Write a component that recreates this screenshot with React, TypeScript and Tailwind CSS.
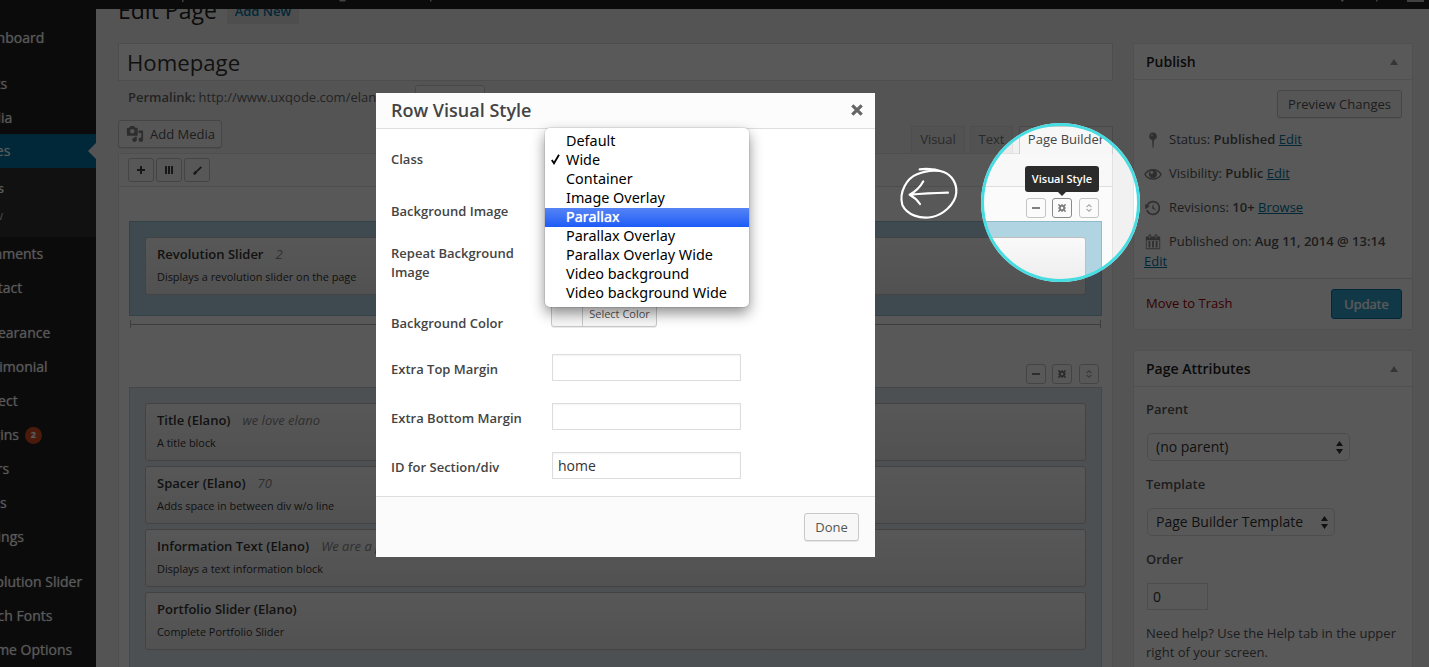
import React from "react";

type MenuEntry = { label: string; gap?: string; active?: boolean; badge?: number };

const topMenu: MenuEntry[] = [
  { label: "Dashboard", gap: "pt-0.5" },
  { label: "Posts", gap: "mt-3 pt-px" },
  { label: "Media", gap: "pt-px" },
  { label: "Pages", active: true },
];

const bottomMenu: MenuEntry[] = [
  { label: "Comments" },
  { label: "Contact" },
  { label: "Appearance", gap: "mt-[11px]" },
  { label: "Testimonial" },
  { label: "Project" },
  { label: "Plugins", badge: 2 },
  { label: "Users" },
  { label: "Tools" },
  { label: "Settings" },
  { label: "Revolution Slider", gap: "mt-[11px]" },
  { label: "Punch Fonts" },
  { label: "Theme Options" },
];

const blocks = [
  { title: "Title (Elano)", note: "we love elano", text: "A title block" },
  { title: "Spacer (Elano)", note: "70", text: "Adds space in between div w/o line" },
  { title: "Information Text (Elano)", note: "We are a premium agency", text: "Displays a text information block" },
  { title: "Portfolio Slider (Elano)", note: "", text: "Complete Portfolio Slider" },
];

const classOptions = [
  "Default",
  "Wide",
  "Container",
  "Image Overlay",
  "Parallax",
  "Parallax Overlay",
  "Parallax Overlay Wide",
  "Video background",
  "Video background Wide",
];

function MenuItem({ label, gap = "", active, badge }: MenuEntry) {
  return (
    <li className={`relative flex h-[34px] shrink-0 items-center text-sm whitespace-nowrap text-white [text-shadow:0_0_1px_rgba(255,255,255,.6)] ${gap} ${active ? "bg-[#0074a2]" : ""}`}>
      <span className="-ml-7">{label}</span>
      {badge && (
        <span className="ml-1.5 flex size-[17px] items-center justify-center rounded-full bg-[#d54e21] text-[9px] font-bold text-white">{badge}</span>
      )}
      {active && (
        <svg className="absolute top-[9px] right-0" width="8" height="16" viewBox="0 0 8 16">
          <path d="M8 0v16L0 8z" fill="#f1f1f1" />
        </svg>
      )}
    </li>
  );
}

function Sidebar() {
  return (
    <nav className="w-24 shrink-0 overflow-hidden bg-[#222222] pt-[11px]">
      <ul className="flex flex-col">
        {topMenu.map((m) => (
          <MenuItem key={m.label} {...m} />
        ))}
      </ul>
      <ul className="flex h-[69px] flex-col bg-[#333333] pt-[7px] text-[13px] whitespace-nowrap">
        <li className="flex h-[27px] items-center font-semibold text-white">
          <span className="-ml-[54px] w-[58px] text-right">All Pages</span>
        </li>
        <li className="flex h-[27px] items-center text-[#bbbbbb]">
          <span className="-ml-[55px] w-[58px] text-right">Add New</span>
        </li>
      </ul>
      <ul className="flex flex-col">
        {bottomMenu.map((m) => (
          <MenuItem key={m.label} {...m} />
        ))}
      </ul>
    </nav>
  );
}

function Block({ title, note, text }: { title: string; note: string; text: string }) {
  return (
    <div className="flex h-[58px] shrink-0 flex-col overflow-hidden rounded-[3px] border border-[#bfbfbf] bg-linear-to-b from-[#fafafa] to-[#e9e9e9] pt-[7px] pl-[11px] whitespace-nowrap text-[#333333]">
      <div className="flex h-[19px] items-center gap-3 text-[13px]">
        <span className="font-semibold">{title}</span>
        <span className="text-[#888888] italic">{note}</span>
      </div>
      <div className="mt-1 flex h-[18px] items-center text-[10.9px]">{text}</div>
    </div>
  );
}

function GearIcon() {
  return (
    <svg width="8" height="8" viewBox="0 0 8 8" fill="none">
      <rect x="2" y="2" width="4" height="4" stroke="#777" strokeWidth="1.600" />
      <path d="M4 0v2M4 6v2M0 4h2M6 4h2" stroke="#777" strokeWidth="1.200" />
      <path d="M.4.4l1.600 1.600M6 6l1.600 1.600M.4 7.600L2 6M6 2L7.600.4" stroke="#777" strokeWidth="1.500" />
    </svg>
  );
}

function RowControls({ active }: { active?: boolean }) {
  const base = "flex size-5 items-center justify-center rounded-[3px] border bg-[#fbfbfb]";
  return (
    <div className="flex h-5 justify-end pr-[3px]">
      <span className={`${base} border-[#c4c4c4]`}>
        <span className="h-0.5 w-2 bg-[#808080]" />
      </span>
      <span className={`${base} ml-1.5 ${active ? "border-[#8a8a8a]" : "border-[#c4c4c4]"}`}>
        <GearIcon />
      </span>
      <span className={`${base} ml-[7px] border-[#c4c4c4]`}>
        <svg width="6" height="8" viewBox="0 0 6 8" fill="none" stroke="#aaa" strokeWidth="1.1">
          <path d="M.6 3L3 .8 5.4 3M.6 5L3 7.2 5.4 5" />
        </svg>
      </span>
    </div>
  );
}

function ToolButton({ children }: { children: React.ReactNode }) {
  return <span className="flex h-6 w-[26px] items-center justify-center rounded-[3px] border border-[#c2c2c2] bg-[#fafafa]">{children}</span>;
}

function Editor() {
  return (
    <main className="ml-[22px] flex w-[995px] shrink-0 flex-col">
      <div className="-mt-4 flex h-[50px] shrink-0 items-start whitespace-nowrap">
        <h1 className="-mt-px flex h-9 items-center text-[23px] text-[#222222]">Edit Page</h1>
        <span className="mt-1.5 ml-2.5 flex h-[25px] w-[72px] items-center justify-center bg-[#e0e0e0] text-[13px] font-semibold text-[#0074a2]">Add New</span>
      </div>
      <div className="flex h-[38px] shrink-0 items-center border border-[#dddddd] bg-white pt-0.5 pl-2 text-[22.2px] text-[#333333]">Homepage</div>
      <div className="flex h-[39px] shrink-0 items-start pl-2.5 text-[13px] whitespace-nowrap text-[#666666]">
        <div className="flex h-8 items-center pt-0.5">
          <strong className="font-semibold">Permalink:</strong>
          <span className="ml-[3px]">http://www.uxqode.com/elano/</span>
        </div>
        <span className="mt-1 ml-[26px] h-[27px] w-[70px] rounded-[3px] border border-[#cccccc] bg-[#f7f7f7]" />
      </div>
      <div className="flex h-[33px] shrink-0 justify-between">
        <div className="flex h-7 w-[104px] items-center gap-1.5 rounded-[3px] border border-[#c6c6c6] bg-[#f7f7f7] pl-[7px] text-[13px] whitespace-nowrap text-[#555555] shadow-[0_1px_0_rgba(0,0,0,.08)]">
          <svg width="18" height="18" viewBox="0 0 20 20" fill="#828282">
            <path d="M13 11V4c0-.55-.45-1-1-1h-1.67L9 1H5L3.67 3H2c-.55 0-1 .45-1 1v7c0 .55.45 1 1 1h10c.55 0 1-.45 1-1zM7 4.5c1.38 0 2.5 1.12 2.5 2.5S8.38 9.5 7 9.5 4.5 8.38 4.5 7 5.62 4.5 7 4.5zM14 6h5v10.5c0 1.38-1.12 2.5-2.5 2.5S14 17.88 14 16.5s1.12-2.5 2.5-2.5c.17 0 .34.02.5.05V9h-3V6zm-4 8.05V13h2v3.5c0 1.38-1.12 2.5-2.5 2.5S7 17.88 7 16.5 8.12 14 9.5 14c.17 0 .34.02.5.05z" />
          </svg>
          <span className="pt-0.5">Add Media</span>
        </div>
        <div className="flex items-end text-[13px] whitespace-nowrap text-[#777777]">
          <span className="mr-[5px] flex h-[27px] w-[54px] items-center justify-center border border-b-0 border-[#e0e0e0] bg-[#ebebeb]">Visual</span>
          <span className="mr-1.5 flex h-[27px] w-[43px] items-center justify-center border border-b-0 border-[#e0e0e0] bg-[#ebebeb]">Text</span>
          <span className="z-10 -mb-px flex h-7 w-[94px] items-center justify-center border border-b-0 border-[#cfcfcf] bg-[#f7f7f7] pb-0.5 text-[#444444]">Page Builder</span>
        </div>
      </div>
      <div className="flex h-[600px] shrink-0 flex-col border border-[#e2e2e2] bg-[#fbfbfb]">
        <div className="flex h-[33px] shrink-0 items-start gap-0.5 border-b border-[#dedede] bg-[#f8f8f8] pt-1 pl-[9px]">
          <ToolButton>
            <svg width="8" height="8" viewBox="0 0 8 8" stroke="#444" strokeWidth="2">
              <path d="M4 0v8M0 4h8" />
            </svg>
          </ToolButton>
          <ToolButton>
            <svg width="8" height="8" viewBox="0 0 8 8" fill="#444">
              <path d="M0 0h2v8H0zM3 0h2v8H3zM6 0h2v8H6z" />
            </svg>
          </ToolButton>
          <ToolButton>
            <svg width="9" height="9" viewBox="0 0 9 9" fill="none" stroke="#444" strokeWidth="1.8">
              <path d="M8.4.8L4 5.2M3.6 5L1 8" />
              <path d="M3.5 5.6L.9 8.2" strokeWidth="2.4" />
            </svg>
          </ToolButton>
        </div>
        <div className="flex flex-col pt-[11px] pr-2.5 pl-2.5">
          <RowControls active />
          <div className="mt-[3px] h-[95px] border border-[#8fbccb] bg-[#b1d4e3] px-[15px] pt-[15px]">
            <Block title="Revolution Slider" note="2" text="Displays a revolution slider on the page" />
          </div>
          <div className="mx-px mt-[4px] flex h-2 items-center border-x border-[#b0b0b0]">
            <span className="h-px w-full bg-[#b0b0b0]" />
          </div>
          <div className="mt-9">
            <RowControls />
          </div>
          <div className="mt-[3px] flex h-[300px] flex-col gap-[5px] border border-[#bccbd2] bg-[#dae4ea] px-[15px] pt-[15px]">
            {blocks.map((b) => (
              <Block key={b.title} {...b} />
            ))}
          </div>
        </div>
      </div>
    </main>
  );
}

function PanelHeader({ children }: { children: React.ReactNode }) {
  return (
    <div className="flex h-9 shrink-0 items-center justify-between border-b border-[#e6e6e6] pr-3.5 pl-3 text-sm font-semibold text-[#222222]">
      {children}
      <svg width="8" height="6" viewBox="0 0 8 6" fill="#999">
        <path d="M4 0l4 6H0z" />
      </svg>
    </div>
  );
}

function StatusRow({ icon, children }: { icon: React.ReactNode; children: React.ReactNode }) {
  return (
    <div className="flex h-[34px] shrink-0 items-center text-[13px] whitespace-nowrap text-[#555555]">
      <span className="mr-[7px] flex w-[18px] shrink-0 justify-center">{icon}</span>
      <span>{children}</span>
    </div>
  );
}

function Link({ children }: { children: React.ReactNode }) {
  return <span className="text-[#0074a2] underline">{children}</span>;
}

function Select({ label, width }: { label: string; width: string }) {
  return (
    <div className={`flex h-7 items-center justify-between rounded-[5px] border border-[#dcdcdc] pr-1.5 pl-2 text-sm text-[#333333] ${width}`}>
      {label}
      <svg width="7" height="13" viewBox="0 0 7 13" fill="#333">
        <path d="M3.5 0L7 5H0zM3.5 13L7 8H0z" />
      </svg>
    </div>
  );
}

function RightColumn() {
  const iconSize = { width: 18, height: 18, viewBox: "0 0 20 20", fill: "#888888" };
  return (
    <aside className="ml-5 flex w-[280px] shrink-0 flex-col gap-5 pt-[34px]">
      <section className="flex h-[287px] shrink-0 flex-col border border-[#e5e5e5] bg-white">
        <PanelHeader>Publish</PanelHeader>
        <div className="flex h-[199px] shrink-0 flex-col border-b border-[#dddddd] px-2.5 pt-2.5">
          <span className="mb-[5px] flex h-7 w-[125px] shrink-0 items-center justify-center self-end rounded-[3px] border border-[#c8c8c8] bg-[#f7f7f7] pt-px text-[13px] text-[#555555] shadow-[0_1px_0_rgba(0,0,0,.08)]">Preview Changes</span>
          <StatusRow
            icon={
              <svg {...iconSize}>
                <circle cx="10" cy="5.800" r="4.200" />
                <path d="M9 9h2.200l-.6 9.500H9.600z" />
                <circle cx="8.700" cy="4.600" r="1.200" fill="#fff" opacity=".5" />
              </svg>
            }
          >
            Status: <b className="font-semibold">Published</b> <Link>Edit</Link>
          </StatusRow>
          <StatusRow
            icon={
              <svg {...iconSize}>
                <path d="M1 10.500C5 3.500 15 3.500 19 10.500 15 17.500 5 17.500 1 10.500z" fill="none" stroke="#888" strokeWidth="1.5" />
                <circle cx="10" cy="10" r="4.6" />
                <circle cx="8.600" cy="8.400" r="1.600" fill="#fff" />
              </svg>
            }
          >
            Visibility: <b className="font-semibold">Public</b> <Link>Edit</Link>
          </StatusRow>
          <StatusRow
            icon={
              <svg {...iconSize}>
                <path d="M13.65 2.88c3.93 2.01 5.48 6.84 3.47 10.77s-6.83 5.48-10.77 3.47c-1.87-.96-3.2-2.56-3.86-4.4l1.64-1.03c.45 1.57 1.52 2.95 3.08 3.76 3.01 1.54 6.69.35 8.23-2.66 1.55-3.01.36-6.69-2.65-8.24C9.78 3.01 6.1 4.2 4.56 7.21l1.88.97-4.95 3.08-.39-5.82 1.78.91C4.9 2.4 9.75.89 13.65 2.88zm-4.36 7.83C9.11 10.53 9 10.28 9 10c0-.07.03-.12.04-.19h-.01L10 5l.97 4.81L14 13l-4.5-2.12.02-.02c-.08-.04-.16-.09-.23-.15z" />
              </svg>
            }
          >
            Revisions: <b className="font-semibold">10+</b> <Link>Browse</Link>
          </StatusRow>
          <StatusRow
            icon={
              <svg {...iconSize}>
                <path d="M15 4h3v14H2V4h3V3c0-.83.67-1.5 1.5-1.5S8 2.17 8 3v1h4V3c0-.83.67-1.5 1.5-1.5S15 2.17 15 3v1zM6 3v2.5c0 .28.22.5.5.5s.5-.22.5-.5V3c0-.28-.22-.5-.5-.5S6 2.72 6 3zm7 0v2.5c0 .28.22.5.5.5s.5-.22.5-.5V3c0-.28-.22-.5-.5-.5s-.5.22-.5.5zm4 14V8H3v9h14zM7 16V9H5v7h2zm4 0V9H9v7h2zm4 0V9h-2v7h2z" />
              </svg>
            }
          >
            Published on: <b className="font-semibold">Aug 11, 2014 @ 13:14</b>
          </StatusRow>
          <div className="-mt-2 text-[13px] leading-5">
            <Link>Edit</Link>
          </div>
        </div>
        <div className="flex grow items-center justify-between bg-[#fbfbfb] pr-2.5 pl-3 text-[13px]">
          <span className="text-[#a00000]">Move to Trash</span>
          <span className="flex h-[30px] w-[71px] items-center justify-center rounded-[3px] border border-[#0074a2] bg-[#2ea2cc] pt-px text-white [text-shadow:0_0_1px_#fff]">Update</span>
        </div>
      </section>
      <section className="flex h-[340px] shrink-0 flex-col border border-[#e5e5e5] bg-white">
        <PanelHeader>Page Attributes</PanelHeader>
        <div className="flex flex-col px-[13px] pt-3 text-[13px] text-[#555555]">
          <b className="-ml-px leading-5 font-semibold">Parent</b>
          <div className="mt-3.5 mb-3.5">
            <Select label="(no parent)" width="w-[203px]" />
          </div>
          <b className="-mt-px -ml-px leading-5 font-semibold">Template</b>
          <div className="mt-3.5 mb-3.5">
            <Select label="Page Builder Template" width="w-[188px]" />
          </div>
          <b className="-mt-px -ml-px leading-5 font-semibold">Order</b>
          <div className="mt-3.5 flex h-[27px] w-[61px] items-center border border-[#dcdcdc] pl-[5px] text-sm text-[#333333]">0</div>
          <p className="mt-3.5 -mr-3 -ml-px leading-[19px]">
            Need help? Use the Help tab in the upper
            <br />
            right of your screen.
          </p>
        </div>
      </section>
    </aside>
  );
}

function Field({ label, space, children }: { label: string; space: string; children?: React.ReactNode }) {
  return (
    <div className={`flex ${space}`}>
      <label className="w-[161px] shrink-0 pr-5 text-[13px] leading-[19px] font-semibold text-[#444444]">{label}</label>
      {children}
    </div>
  );
}

function TextBox({ value }: { value?: string }) {
  return <div className="-mt-1.5 flex h-[27px] w-[189px] items-center border border-[#dddddd] bg-white pl-[5px] text-sm text-[#333333] shadow-[inset_0_1px_2px_rgba(0,0,0,.05)]">{value}</div>;
}

function RowStyleDialog() {
  return (
    <div className="absolute top-[93px] left-[376px] flex h-[464px] w-[499px] flex-col bg-white">
      <header className="flex h-9 shrink-0 items-center justify-between border-b border-[#dedede] bg-[#fcfcfc] pr-3 pb-0.5 pl-[15px]">
        <h2 className="text-lg font-semibold text-[#444444]">Row Visual Style</h2>
        <svg width="12" height="12" viewBox="0 0 12 12" stroke="#666" strokeWidth="3.200">
          <path d="M1.300 1.300l9.400 9.400M10.700 1.300L1.300 10.700" />
        </svg>
      </header>
      <div className="flex grow flex-col pt-[21px] pl-[15px]">
        <Field label="Class" space="h-[52px]" />
        <Field label="Background Image" space="h-[42px]" />
        <Field label="Repeat Background Image" space="h-[70px]" />
        <Field label="Background Color" space="h-[46px]">
          <div className="-mt-3 -ml-px flex h-[25px] w-[106px] overflow-hidden rounded-[3px] border border-[#c8c8c8] bg-[#f7f7f7] text-[11px] text-[#555555] shadow-[0_1px_0_rgba(0,0,0,.08)]">
            <span className="w-[31px] border-r border-[#c8c8c8]" />
            <span className="flex grow items-center justify-center whitespace-nowrap">Select Color</span>
          </div>
        </Field>
        <Field label="Extra Top Margin" space="h-[49px]">
          <TextBox />
        </Field>
        <Field label="Extra Bottom Margin" space="h-[49px]">
          <TextBox />
        </Field>
        <Field label="ID for Section/div" space="h-[30px]">
          <TextBox value="home" />
        </Field>
      </div>
      <footer className="flex h-[61px] shrink-0 items-center justify-end border-t border-[#dedede] bg-[#fbfbfb] pr-4">
        <span className="flex h-7 w-[55px] items-center justify-center rounded-[3px] border border-[#c8c8c8] bg-[#f7f7f7] pt-px text-[13px] text-[#555555] shadow-[0_1px_0_rgba(0,0,0,.08)]">Done</span>
      </footer>
      <ul className="absolute top-[35px] left-[169px] w-[204px] rounded-[5px] bg-white py-1 font-['Noto_Sans'] text-[14.4px] text-black shadow-[0_6px_14px_rgba(0,0,0,.45),0_0_0_1px_rgba(0,0,0,.08)]">
        {classOptions.map((o) => (
          <li key={o} className={`flex h-[19px] items-center pb-[2px] whitespace-nowrap ${o === "Parallax" ? "bg-linear-to-b from-[#5583f5] to-[#1c5bf7] text-white [text-shadow:0_0_1px_#fff]" : ""}`}>
            <span className="flex w-[21px] justify-center">
              {o === "Wide" && (
                <svg width="9" height="11" viewBox="0 0 9 11" fill="none" stroke="#000" strokeWidth="1.800">
                  <path d="M.8 6L3 9.300 8 .8" />
                </svg>
              )}
            </span>
            {o}
          </li>
        ))}
      </ul>
    </div>
  );
}

function AdminBar() {
  return (
    <div className="relative z-20 h-[9px] shrink-0 bg-[#222222]">
      <svg width="1429" height="9" viewBox="0 0 1429 9" fill="#bbb">
        <path d="M182 0h1.500v2h-1.500zM339 0h7l-1 1.500h-5zM430 0h1.500v1.500H430zM1341 0h3l-1 1.500h-2zM1376 0h1.500v1.500h-1.500zM1407 0h17v2h-17z" />
      </svg>
    </div>
  );
}

export default function App() {
  return (
    <div className="relative flex h-[667px] w-[1429px] flex-col overflow-hidden bg-[#f1f1f1] font-['Open_Sans','Noto_Sans',sans-serif]">
      <AdminBar />
      <div className="flex h-[658px]">
        <Sidebar />
        <Editor />
        <RightColumn />
      </div>

      <div className="absolute top-[123px] left-[981px] z-30 size-[159px] rounded-full border-[3px] border-[#45dce2] shadow-[0_0_0_1500px_rgba(0,0,0,.65)]" />
      <div className="absolute top-[166px] left-[1025px] z-40 flex h-[26px] w-[74px] items-center justify-center rounded-[3px] bg-[#2b2b2b] text-[11px] font-semibold whitespace-nowrap text-white">
        Visual Style
        <svg className="absolute top-[26px] left-[33px]" width="8" height="4" viewBox="0 0 8 4" fill="#2b2b2b">
          <path d="M0 0h8L4 4z" />
        </svg>
      </div>
      <svg className="absolute top-[165px] left-[897px] z-40" width="63.300" height="56.700" viewBox="470 255 190 170" fill="none" stroke="#fff" strokeWidth="6.500" strokeLinecap="round" strokeLinejoin="round">
        <path d="M538 268Q575 263 610 276C635 286 650 310 648 338C645 375 605 405 575 411C540 418 500 405 486 375C475 335 500 295 530 283C555 272 580 270 598 273" />
        <path d="M623 338Q560 340 508 344M549 304Q535 330 508 344Q527 354 539 372" />
      </svg>
      <div className="absolute inset-0 z-40">
        <RowStyleDialog />
      </div>
    </div>
  );
}
